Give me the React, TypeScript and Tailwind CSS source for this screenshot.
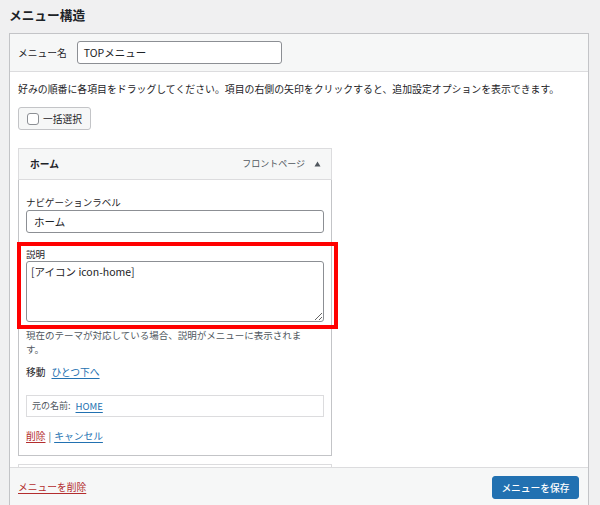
import React from "react";

export default function App() {
  return (
    <div className="w-[600px] h-[505px] overflow-hidden bg-[#f0f0f1] text-[#1d2327] font-['Noto_Sans_CJK_JP',sans-serif]">
      <h2 className="h-[33px] pl-[9px] pt-[5px] text-[12.7px] leading-[19px] font-bold">メニュー構造</h2>
      <div className="ml-[9px] w-[580px] border border-[#c3c4c7] bg-white">
        {/* header */}
        <div className="h-[38px] bg-[#f6f7f7] border-b border-[#dcdcde] flex items-center pl-[8px]">
          <span className="text-[9.75px] leading-[14px]">メニュー名</span>
          <div className="ml-[10px] w-[205px] h-[23px] border border-[#8c8f94] rounded-[3px] bg-white flex items-center pl-[6px] text-[10.5px] leading-[14px]">
            TOPメニュー
          </div>
        </div>
        {/* body */}
        <div className="pl-[8px] pr-[8px] pt-[10px]">
          <p className="text-[9.9px] leading-[15px] whitespace-nowrap">
            好みの順番に各項目をドラッグしてください。項目の右側の矢印をクリックすると、追加設定オプションを表示できます。
          </p>
          <div className="mt-[10px] w-[73px] h-[23px] border border-[#c3c4c7] rounded-[3px] bg-[#f6f7f7] flex items-center pl-[8px] gap-[4px]">
            <span className="w-[12px] h-[12px] border border-[#8c8f94] rounded-[3px] bg-white" />
            <span className="text-[9.75px] leading-[14px]">一括選択</span>
          </div>

          {/* menu item */}
          <div className="mt-[18px] w-[314px]">
            <div className="h-[32px] border border-[#dcdcde] bg-[#f6f7f7] flex items-center pl-[11px] pr-[10px]">
              <span className="text-[9.75px] leading-[14px] font-bold">ホーム</span>
              <span className="ml-auto text-[9px] leading-[14px] text-[#50575e]">フロントページ</span>
              <svg className="ml-[9px]" width="7" height="6" viewBox="0 0 7 6">
                <path d="M3.5 0.5 L6.5 5.5 L0.5 5.5 Z" fill="#50575e" />
              </svg>
            </div>
            <div className="relative border-x border-b border-[#c3c4c7] px-[7px] pt-[15px] pb-[12px]">
              <div className="text-[9.5px] leading-[14px] text-[#1d2327]">ナビゲーションラベル</div>
              <div className="mt-[1px] h-[23px] border border-[#8c8f94] rounded-[3px] bg-white flex items-center pl-[7px] text-[10.5px] leading-[14px]">
                ホーム
              </div>
              <div className="mt-[14px] text-[9.5px] leading-[14px]">説明</div>
              <textarea
                readOnly
                defaultValue="[アイコン icon-home]"
                className="block w-full h-[61px] border border-[#8c8f94] rounded-[3px] bg-white pl-[4px] pt-[2px] text-[10.5px] leading-[15px] outline-none"
              />
              <p className="mt-[6px] text-[9.5px] leading-[14px] text-[#50575e]">
                現在のテーマが対応している場合、説明がメニューに表示されま
                <br />
                す。
              </p>
              <div className="mt-[9px] text-[9.75px] leading-[14px] flex gap-[6px]">
                <span>移動</span>
                <span className="text-[#2271b1] underline underline-offset-2">ひとつ下へ</span>
              </div>
              <div className="mt-[16px] h-[22px] border border-[#dcdcde] flex items-center pl-[5px] text-[9px] leading-[14px]">
                <span className="text-[#50575e]">元の名前:</span>
                <span className="ml-[5px] text-[#2271b1] underline underline-offset-2 text-[9.5px]">HOME</span>
              </div>
              <div className="mt-[12px] text-[9.75px] leading-[14px] flex items-center gap-[3px]">
                <span className="text-[#b32d2e] underline underline-offset-2">削除</span>
                <span className="text-[#50575e]">|</span>
                <span className="text-[#2271b1] underline underline-offset-2">キャンセル</span>
              </div>

              {/* red annotation box */}
              <div className="absolute left-[-2px] top-[62px] w-[321px] h-[87px] border-[4px] border-[#ff0000]" />
            </div>
            <div className="mt-[8px] h-[3px] border-t border-x border-[#dcdcde]" />
          </div>
        </div>
        {/* footer */}
        <div className="h-[50px] bg-[#f6f7f7] border-t border-[#dcdcde] flex items-start pl-[8px] pr-[9px] pt-[8px]">
          <span className="mt-[4px] text-[9.75px] leading-[14px] text-[#b32d2e] underline underline-offset-2">メニューを削除</span>
          <div className="ml-auto w-[87px] h-[23px] rounded-[3px] bg-[#2271b1] border border-[#2271b1] flex items-center justify-center text-white text-[9.75px] leading-[14px] font-medium">
            メニューを保存
          </div>
        </div>
      </div>
    </div>
  );
}
